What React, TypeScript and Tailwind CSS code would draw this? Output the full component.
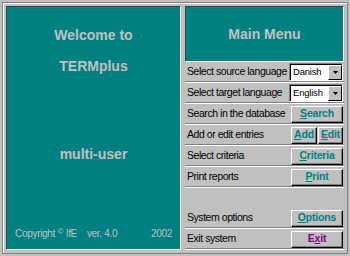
import { ReactNode } from 'react';

const font = { fontFamily: '"Liberation Sans", Arial, sans-serif' };

function Btn({ children, w = 'w-[52px]' }: { children: ReactNode; w?: string }) {
    return (
        <div className={`${w} h-[17px] bg-[#c0c0c0] border-t border-l border-t-white border-l-white border-b border-r border-b-black border-r-black shadow-[inset_-1px_-1px_0_#808080] flex items-center justify-center text-[10.5px] font-bold tracking-[-0.2px] text-[#008080]`}>
            {children}
        </div>
    );
}

function Combo({ value }: { value: string }) {
    return (
        <div className="w-[54px] h-[18px] flex border-t border-l border-t-[#808080] border-l-[#808080] border-b border-r border-b-white border-r-white">
            <div className="flex-1 flex border-t border-l border-t-black border-l-black bg-white">
                <span className="flex-1 text-[9.5px] leading-[14px] pl-[2px] text-black tracking-[-0.2px]">{value}</span>
                <div className="w-[14px] bg-[#c0c0c0] border-t border-l border-t-white border-l-white border-b border-r border-b-black border-r-black flex items-center justify-center">
                    <svg width="5" height="3" viewBox="0 0 5 3"><path d="M0 0h5L2.5 3z" fill="#000" /></svg>
                </div>
            </div>
        </div>
    );
}

function Row({ label, children, line = true }: { label: string; children?: ReactNode; line?: boolean }) {
    return (
        <div className={`h-[21px] flex items-center justify-between pl-[2px] pr-[1px] ${line ? 'border-b border-b-white shadow-[inset_0_-1px_0_#808080]' : ''}`}>
            <span className="text-[10.5px] tracking-[-0.45px] text-black">{label}</span>
            {children}
        </div>
    );
}

export default function App() {
    return (
        <div className="w-[350px] h-[256px] bg-[#c0c0c0] p-[2px]" style={font}>
            <div className="h-full border border-[#808080] shadow-[inset_1px_1px_0_white] p-[3px] flex gap-[4px]">
                {/* Welcome panel */}
                <div className="w-[175px] h-full bg-[#008080] border-t border-l border-t-[#404040] border-l-[#404040] border-b border-r border-b-white border-r-white flex flex-col items-center text-[#c0c0c0]">
                    <div className="mt-[18px] text-[14px] font-bold">Welcome to</div>
                    <div className="mt-[10px] text-[14px] font-bold">TERMplus</div>
                    <div className="mt-[67px] text-[14px] font-bold">multi-user</div>
                    <div className="mt-auto mb-[8px] w-full flex justify-between px-[8px] text-[10px] tracking-[-0.3px]">
                        <span>Copyright <span className="text-[8px] align-top">©</span> IfE&nbsp;&nbsp;&nbsp; ver. 4.0</span>
                        <span>2002</span>
                    </div>
                </div>

                {/* Main menu */}
                <div className="flex-1 flex flex-col">
                    <div className="h-[56px] shrink-0 bg-[#008080] border-t border-l border-t-[#404040] border-l-[#404040] border-b border-r border-b-white border-r-white flex items-center justify-center text-[14px] font-bold text-[#c0c0c0]">
                        Main Menu
                    </div>
                    <Row label="Select source language"><Combo value="Danish" /></Row>
                    <Row label="Select target language"><Combo value="English" /></Row>
                    <Row label="Search in the database"><Btn><u>S</u>earch</Btn></Row>
                    <Row label="Add or edit entries">
                        <div className="flex gap-[1px]">
                            <Btn w="w-[26px]"><u>A</u>dd</Btn>
                            <Btn w="w-[25px]"><u>E</u>dit</Btn>
                        </div>
                    </Row>
                    <Row label="Select criteria"><Btn><u>C</u>riteria</Btn></Row>
                    <Row label="Print reports"><Btn><u>P</u>rint</Btn></Row>
                    <div className="flex-1" />
                    <Row label="System options"><Btn><u>O</u>ptions</Btn></Row>
                    <Row label="Exit system">
                        <Btn><span className="text-[#800080]">E<u>x</u>it</span></Btn>
                    </Row>
                </div>
            </div>
        </div>
    );
}
